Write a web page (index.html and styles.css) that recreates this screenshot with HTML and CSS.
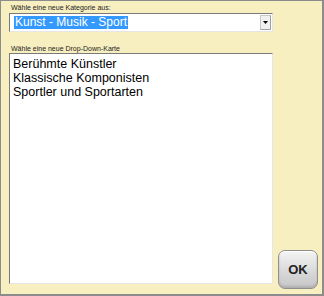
FILE: index.html
```html
<!DOCTYPE html>
<html>
<head>
<meta charset="utf-8">
<link rel="stylesheet" href="styles.css">
</head>
<body>
<div class="frame">
  <div class="main">
    <div class="label">Wähle eine neue Kategorie aus:</div>
    <div class="select">
      <span class="sel-text">Kunst - Musik - Sport</span>
      <span class="arrow"><svg width="5" height="3" viewBox="0 0 5 3"><path d="M0 0H5L2.5 3Z" fill="#000"/></svg></span>
    </div>
    <div class="label label2">Wähle eine neue Drop-Down-Karte</div>
    <div class="list">
      <div class="item">Berühmte Künstler</div>
      <div class="item">Klassische Komponisten</div>
      <div class="item">Sportler und Sportarten</div>
    </div>
  </div>
  <div class="side">
    <button class="ok">OK</button>
  </div>
</div>
</body>
</html>
```
FILE: styles.css
```css
html, body {
  margin: 0;
  padding: 0;
}
.frame {
  width: 324px;
  height: 296px;
  box-sizing: border-box;
  background: #f8efc0;
  border-top: 1px solid #8c8c8c;
  border-left: 1px solid #8c8c8c;
  border-right: 2px solid #8c8c8c;
  border-bottom: 2px solid #8c8c8c;
  display: flex;
  flex-direction: row;
}
.main {
  display: flex;
  flex-direction: column;
  margin-left: 8px;
  padding-top: 2px;
  width: 264px;
}
.label {
  font-family: "Liberation Sans", Arial, sans-serif;
  font-size: 7px;
  line-height: 9px;
  height: 9px;
  color: #222;
  padding-left: 2px;
  white-space: nowrap;
}
.select {
  margin-top: 1px;
  height: 19px;
  box-sizing: border-box;
  background: #fff;
  border-top: 1px solid #7a7a7a;
  border-left: 1px solid #7a7a7a;
  border-right: 1px solid #e6e6e6;
  border-bottom: 1px solid #e6e6e6;
  display: flex;
  align-items: center;
  padding-left: 4px;
}
.sel-text {
  font-family: "Liberation Sans", Arial, sans-serif;
  font-size: 12px;
  line-height: 13px;
  background: #3399ff;
  color: #fff;
  padding: 0 1px;
}
.arrow {
  margin-left: auto;
  width: 11px;
  height: 15px;
  box-sizing: border-box;
  background: #f0f0f0;
  border: 1px solid #c8c8c8;
  border-right-color: #a0a0a0;
  border-bottom-color: #a0a0a0;
  display: flex;
  align-items: center;
  justify-content: center;
  margin-right: 1px;
}
.arrow svg {
  display: block;
}
.label2 {
  margin-top: 12px;
}
.list {
  height: 231px;
  box-sizing: border-box;
  background: #fff;
  border-top: 1px solid #7a7a7a;
  border-left: 1px solid #7a7a7a;
  border-right: 1px solid #e6e6e6;
  border-bottom: 1px solid #e6e6e6;
  padding: 3px 0 0 3px;
}
.item {
  font-family: "Liberation Sans", Arial, sans-serif;
  font-size: 12.5px;
  line-height: 14px;
  color: #000;
}
.side {
  display: flex;
  flex-direction: column;
  justify-content: flex-end;
  margin-left: 5px;
  padding-bottom: 5px;
}
.ok {
  width: 40px;
  height: 39px;
  margin: 0;
  padding: 0;
  border: 1px solid #8f8f8f;
  border-radius: 7px;
  background: linear-gradient(#f4f4f4, #d9d9d9 55%, #c6c6c6);
  box-shadow: inset 0 1px 0 #fff, inset 0 -2px 2px #b0b0b0;
  font-family: "Liberation Sans", Arial, sans-serif;
  font-weight: bold;
  font-size: 13px;
  color: #222;
}
```
